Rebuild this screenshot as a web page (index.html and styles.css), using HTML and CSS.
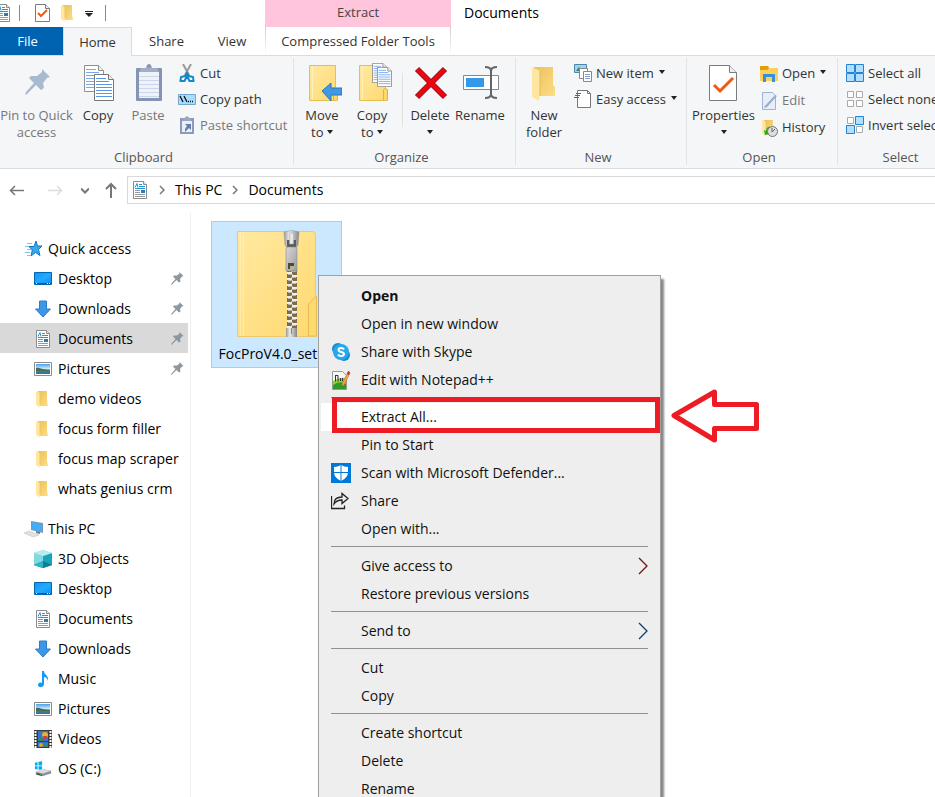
FILE: index.html
```html
<!DOCTYPE html>
<html lang="en">
<head>
<meta charset="utf-8">
<title>Documents</title>
<link rel="stylesheet" href="styles.css">
</head>
<body>
<svg class="sprite" aria-hidden="true">
  <defs>
    <linearGradient id="gold" x1="0" y1="0" x2="1" y2="1"><stop offset="0" stop-color="#ffe9a2"/><stop offset="1" stop-color="#ffd96f"/></linearGradient>
    <linearGradient id="goldDark" x1="0" y1="0" x2="1" y2="1"><stop offset="0" stop-color="#e9c15c"/><stop offset="1" stop-color="#ffdd84"/></linearGradient>
    <linearGradient id="metal" x1="0" y1="0" x2="1" y2="0"><stop offset="0" stop-color="#999"/><stop offset=".35" stop-color="#ececec"/><stop offset="1" stop-color="#858585"/></linearGradient>
    <linearGradient id="plate" x1="0" y1="0" x2="1" y2="1"><stop offset="0" stop-color="#d8d8d8"/><stop offset="1" stop-color="#9c9c9c"/></linearGradient>
    <linearGradient id="sky" x1="0" y1="0" x2="0" y2="1"><stop offset="0" stop-color="#4aa0ec"/><stop offset=".5" stop-color="#d8effa"/><stop offset=".6" stop-color="#587e82"/><stop offset="1" stop-color="#1c79a3"/></linearGradient>
    <linearGradient id="screen" x1="0" y1="0" x2="1" y2="1"><stop offset="0" stop-color="#0d93f6"/><stop offset=".5" stop-color="#26aaff"/><stop offset="1" stop-color="#0a8eef"/></linearGradient>
    <pattern id="teeth" x="50" width="10" height="6" patternUnits="userSpaceOnUse"><path fill="#7d6c45" d="M0 0h10v6H0z"/><path fill="#f0eee9" d="M0 0h5v2H0zM5 3h5v2H5z"/><path fill="#bdb8ac" d="M1 2h5v1H1zM4 5h5v1H4z"/></pattern>
  </defs>
  <symbol id="doc" viewBox="0 0 18 18"><path d="M2.500.5h10l3 3v14h-13z" fill="#fff" stroke="#8b8b8b"/><path d="M12.500.5v3h3" fill="#eee" stroke="#8b8b8b"/><path d="M4 6.500l2-4 1 4M8 3.500h3M8 5.500h6M4 7.500h10" stroke="#2196dc" fill="none"/><path d="M4 9.500h5M4 11.500h5M4 13.500h10M4 15.500h10" stroke="#999"/><path d="M10 9h4v3h-4z" fill="#2f79b5"/></symbol>
  <symbol id="folder" viewBox="0 0 18 18"><path d="M4 1h9v10l1 5H4z" fill="url(#goldDark)"/><path d="M2 1l4 2v11l-.5 3.500L2 15z" fill="#ffe7a0"/><path d="M6 3v11" stroke="#edc868"/></symbol>
  <symbol id="desktop" viewBox="0 0 18 18"><path d="M.5 2.500h17v12H.5z" fill="url(#screen)" stroke="#0067b3"/><path d="M1 13.500h16" stroke="#075b9a"/><path d="M2 13.500h1M13 13.500h1M15 13.500h1" stroke="#fff"/></symbol>
  <symbol id="down" viewBox="0 0 18 18"><path d="M5.500 1h7v8h4L9 17 1.500 9h4z" fill="#3e97e6" stroke="#2b7dc9"/></symbol>
  <symbol id="pic" viewBox="0 0 18 18"><path d="M.5 2.500h17v13H.5z" fill="#fff" stroke="#8c8c8c"/><path d="M2 4h14v10H2z" fill="url(#sky)"/><path d="M2 8c3-1 6 2 14 2v1H2z" fill="#456d55"/></symbol>
  <symbol id="star" viewBox="0 0 20 20"><path d="M12 2l1.500 5H18l-3.500 3.500 1.500 6-4.500-3L7 17l1.300-6L5 7.500h5z" fill="#35a8f0" stroke="#1577bd"/><path d="M3 4.500h5M1 7.500h4M3 10.500h4M1 13.500h5M3 16.500h3" stroke="#7cc4f0"/></symbol>
  <symbol id="pc" viewBox="0 0 20 18"><path d="M7 1l12 2v10L7 10z" fill="#8395a3"/><path d="M8 2l10 2v8L8 9z" fill="#40aef9"/><path d="M12 11l4 1v2l-4-1z" fill="#667d8c"/><path d="M0 13l5-2 10 4-6 2z" fill="#dfe2e5" stroke="#bbb" stroke-width=".5"/></symbol>
  <symbol id="cube" viewBox="0 0 18 18"><path d="M0 3l9-3 9 3v12l-9 3-9-3z" fill="#63cbd5"/><path d="M0 3l9 3v12l-9-3z" fill="#7edbe2"/><path d="M9 6l9-3v12l-9 3z" fill="#1aa3bb"/><path d="M0 3l9-3 9 3-9 3z" fill="#b7edf0"/><path d="M0 15l9-4 9 4-9 3z" fill="#0b7f98"/><path d="M0 15l9-4v7z" fill="#2fb4c6"/></symbol>
  <symbol id="music" viewBox="0 0 18 18"><path d="M8 1h2c0 4 5 4 4 10-1-3-2-4-4-4v7c0 4-6 4-6 1 0-2 2-3 4-2z" fill="#129bf1"/></symbol>
  <symbol id="video" viewBox="0 0 18 18"><path d="M0 0h18v18H0z" fill="#3a3a3a"/><path d="M4 1h10v10H4zM4 12h10v5H4z" fill="#3672cf"/><path d="M1.500 1v17M16.500 1v17" stroke="#fff" stroke-width="2" stroke-dasharray="2 1"/><circle cx="11" cy="5" r="3" fill="#e6b32f"/><path d="M9 6h4l-1 3h-2z" fill="#d13a2f"/><path d="M4 9l3-1 3 3H4zM10 15l4-1v3h-4z" fill="#398b4a"/><circle cx="7" cy="15" r="2" fill="#e6a12f"/></symbol>
  <symbol id="drive" viewBox="0 0 20 18"><path d="M1 2l3-.5V5H1zM5 1l4-.5V5H5zM1 6h3v3.500L1 9zM5 6h4v4l-4-.5z" fill="#00adef"/><path d="M2 12l7-3 10 2v3l-10 3-7-2z" fill="#8e9296"/><path d="M2 12l7-3 10 2-9 3z" fill="#d9dcdf"/><path d="M3 13.500l6 1.500v1.500L3 15z" fill="#444"/><path d="M7 15h1.500" stroke="#39d353"/></symbol>
  <symbol id="pin" viewBox="0 0 26 26"><path d="M17 0l8 8-3 1-4 5 1 5-3 2-5-5-9 9-2 1 1-3 8-9-5-5 2-2 6 0 5-4z"/></symbol>
  <symbol id="page" viewBox="0 0 28 36"><path d="M.5.5h20l7 7v28H.5z" fill="#fff" stroke="#7c7c7c"/><path d="M20.500.5v7h7" fill="#eee" stroke="#7c7c7c"/></symbol>
  <symbol id="check" viewBox="0 0 28 36"><use href="#page"/><path d="M5 20l6 6 13-13" fill="none" stroke="#f0590f" stroke-width="3"/></symbol>
  <symbol id="textpage" viewBox="0 0 20 27"><path d="M.5.5h14l5 5v21H.5z" fill="#fff" stroke="#777"/><path d="M14.500.5v5h5" fill="#eee" stroke="#777"/><path d="M2 4.500h10M2 7.500h13M2 10.500h16M2 13.500h16M2 16.500h16M2 19.500h16M2 22.500h16" stroke="#5b95e8"/></symbol>
  <symbol id="bigfolder" viewBox="0 0 30 36"><path d="M.5.500h26v24h2v11H.5z" fill="url(#gold)" stroke="#e6c04e"/><path d="M3.500 1v34" stroke="#fff0b8"/><path d="M24.500 35V25l2-2 2 2v10" fill="#ffd869" stroke="#e0b33d"/></symbol>
  <symbol id="more" viewBox="0 0 6 12"><path d="M1 2l4 4-4 4" fill="none" stroke="#777" stroke-width="1.500"/></symbol>
  <symbol id="sub" viewBox="0 0 10 18"><path d="M1 1l8 8-8 8" fill="none" stroke="currentColor" stroke-width="1.300"/></symbol>
</svg>

<div class="window">
  <header class="titlebar">
    <div class="quick">
      <svg class="i18 cut-left"><use href="#doc"/></svg>
      <i class="bar"></i>
      <svg class="qcheck" viewBox="0 0 15 18"><path d="M.5.500h10l4 4v13H.5z" fill="#fff" stroke="#7c7c7c"/><path d="M10.500.5v4h4" fill="#eee" stroke="#7c7c7c"/><path d="M3 9l3 3 6-6" fill="none" stroke="#f0590f" stroke-width="2"/></svg>
      <svg class="i18"><use href="#folder"/></svg>
      <svg class="customize" viewBox="0 0 8 6"><path d="M0 .5h8" stroke="#222"/><path d="M0 2h8L4 6z" fill="#222"/></svg>
      <i class="bar"></i>
    </div>
    <div class="context-title">Extract</div>
    <h1>Documents</h1>
  </header>

  <nav class="tabs" aria-label="Ribbon tabs">
    <button class="tab file">File</button>
    <button class="tab home">Home</button>
    <button class="tab share">Share</button>
    <button class="tab view">View</button>
    <button class="tab tools">Compressed Folder Tools</button>
  </nav>

  <section class="ribbon" aria-label="Ribbon">
    <div class="group clipboard">
      <div class="tools-row">
        <button class="big wide off"><svg class="art" viewBox="0 0 40 42"><use href="#pin" x="8" y="9" width="26" height="26" fill="#a9b9d0"/></svg><span>Pin to Quick<br>access</span></button>
        <button class="big"><svg class="art" viewBox="0 0 40 42"><use href="#textpage" x="6" y="5" width="20" height="27" opacity=".8"/><use href="#textpage" x="16" y="14" width="20" height="27"/></svg><span>Copy</span></button>
        <button class="big off"><svg class="art" viewBox="0 0 40 42"><rect x="8" y="8" width="26" height="33" rx="1" fill="#8594b4"/><path d="M11 12h20v26H11z" fill="#eef2f9"/><path d="M11 16.500h20M11 20.500h20M11 24.500h20M11 28.500h20M11 32.500h20M11 36.500h20" stroke="#cbd6e8"/><path d="M13 8h5a3 3 0 016 0h5l2 4H11z" fill="#a1aec6"/><circle cx="21" cy="6" r="2" fill="#8594b4"/></svg><span>Paste</span></button>
        <div class="stack">
          <button class="small"><svg class="i18" viewBox="0 0 18 18"><path d="M5 0l6 11M13 0L7 11" stroke="#999" stroke-width="2"/><path d="M9 9l-2 3-4 1-.5 4h4l2-4 .5-2 .5 2 2 4h4l-.5-4-4-1z" fill="none" stroke="#1687c8" stroke-width="2"/></svg>Cut</button>
          <button class="small"><svg class="i18" viewBox="0 0 18 18"><path d="M.5 4.500h17v10H.5z" fill="#a5dcff" stroke="#73a8ca"/><path d="M2 6l3 6M6 6l3 6M10 11.500h1M12 11.500h1M14 11.500h1" stroke="#111" stroke-width="1.300"/></svg>Copy path</button>
          <button class="small off"><svg class="i18" viewBox="0 0 18 18"><path d="M2 2h14v16H2z" fill="#8b9bb9"/><path d="M4 5h10v11H4z" fill="#e9eff7"/><path d="M5 3l4-3 4 3v2H5z" fill="#9aa8c0"/><path d="M7 8h6v6l-2-2-4 4 0-3 2-3z" fill="#647faa"/></svg>Paste shortcut</button>
        </div>
      </div>
      <div class="label">Clipboard</div>
    </div>

    <div class="group organize">
      <div class="tools-row">
        <button class="big"><svg class="art" viewBox="0 0 40 42"><use href="#bigfolder" x="7" y="5" width="30" height="36"/><path d="M20 31l9-8v5h11v7H29v6z" fill="#3f99e5" stroke="#2877bb"/></svg><span>Move<br>to <i class="caret"></i></span></button>
        <button class="big"><svg class="art" viewBox="0 0 40 42"><use href="#bigfolder" x="7" y="5" width="30" height="36"/><use href="#textpage" x="20" y="3" width="15" height="20"/><use href="#textpage" x="25" y="7" width="15" height="20"/></svg><span>Copy<br>to <i class="caret"></i></span></button>
        <i class="divider"></i>
        <button class="big"><svg class="art" viewBox="0 0 40 42"><path d="M7 9l28 28M35 9L7 37" stroke="#9d1118" stroke-width="6"/><path d="M7.500 9.500l27 27M34.500 9.500l-27 27" stroke="#ea0712" stroke-width="4"/></svg><span>Delete<br><i class="caret"></i></span></button>
        <button class="big"><svg class="art" viewBox="0 0 40 42"><path d="M3.500 15.500h35v14h-35z" fill="#fff" stroke="#888"/><path d="M6 18h18v9H6z" fill="#3599e9"/><path d="M31 9v28M25 7c4 0 6 1 6 4 0-3 2-4 6-4M25 38c4 0 6-1 6-4 0 3 2 4 6 4" fill="none" stroke="#666" stroke-width="2"/></svg><span>Rename</span></button>
      </div>
      <div class="label">Organize</div>
    </div>

    <div class="group new">
      <div class="tools-row">
        <button class="big"><svg class="art" viewBox="0 0 40 42"><path d="M10 7h19v18l2 2v9H10z" fill="url(#goldDark)"/><path d="M8 7l8 4v20l-1 10-7-4z" fill="#ffe6a0"/><path d="M16 11v25" stroke="#e1bc5c"/></svg><span>New<br>folder</span></button>
        <div class="stack">
          <button class="small"><svg class="i18" viewBox="0 0 18 18"><path d="M.5.5h12v8H.5z" fill="#9ed3f3" stroke="#4c86a9"/><path d="M2 7l3-4 3 4z" fill="#477b68"/><path d="M5.500 4.500h8v10h-8z" fill="#fff" stroke="#888"/><path d="M9.500 7.500h8v10h-8z" fill="#fff" stroke="#888"/><path d="M11 10.500h5M11 12.500h5M11 14.500h5" stroke="#8a9ed0"/></svg>New item <i class="caret"></i></button>
          <button class="small"><svg class="i18" viewBox="0 0 18 18"><path d="M3.500.5h10l3 3v14h-13z" fill="#fff" stroke="#777"/><path d="M13.500.5v3h3" fill="none" stroke="#777"/><path d="M2 3.500h5M1 5.500h5M0 7.500h5" stroke="#1877ae"/></svg>Easy access <i class="caret"></i></button>
        </div>
      </div>
      <div class="label">New</div>
    </div>

    <div class="group open">
      <div class="tools-row">
        <button class="big wide"><svg class="art" viewBox="0 0 40 42"><use href="#check" x="5" y="5" width="28" height="36"/></svg><span>Properties<br><i class="caret"></i></span></button>
        <div class="stack loose">
          <button class="small"><svg class="i18" viewBox="0 0 18 18"><path d="M0 1h8l1 2h9v13H0z" fill="#ffd05b"/><path d="M0 1h8l1 2-2 2H0z" fill="#dda00b"/><path d="M3 9h12v8h-3v-5H6v5H3z" fill="#348fdc"/></svg>Open <i class="caret"></i></button>
          <button class="small off"><svg class="i18" viewBox="0 0 18 18"><path d="M2.500.5h10l3 3v14h-13z" fill="#e7eef8" stroke="#a2b3cf"/><path d="M4 15L15 3l2 1L7 15l-3 1z" fill="#9aadcc"/></svg>Edit</button>
          <button class="small"><svg class="i18" viewBox="0 0 18 18"><use href="#folder" width="18" height="18"/><circle cx="12.500" cy="12.500" r="5" fill="#ddd" stroke="#777"/><path d="M12 13l3-3M12 9v4" stroke="#666"/><path d="M11 8c-5 1-4 5-2 7l-4 1-1-5 2 1c0-4 3-5 5-4z" fill="#21ab32"/></svg>History</button>
        </div>
      </div>
      <div class="label">Open</div>
    </div>

    <div class="group select">
      <div class="tools-row">
        <div class="stack">
          <button class="small"><svg class="i18" viewBox="0 0 18 18"><path d="M.5.5h8v8h-8zM9.500.5h8v8h-8zM.5 9.500h8v8h-8zM9.500 9.500h8v8h-8z" fill="#b1dfff" stroke="#2583d3"/></svg>Select all</button>
          <button class="small"><svg class="i18" viewBox="0 0 18 18"><path d="M1.500 1.500h6v6h-6zM10.500 1.500h6v6h-6zM1.500 10.500h6v6h-6zM10.500 10.500h6v6h-6z" fill="#fff" stroke="#aaa"/></svg>Select none</button>
          <button class="small"><svg class="i18" viewBox="0 0 18 18"><path d="M1.500 1.500h6v6h-6zM10.500 10.500h6v6h-6z" fill="#fff" stroke="#aaa"/><path d="M9.500.5h8v8h-8zM.5 9.500h8v8h-8z" fill="#b1dfff" stroke="#2583d3"/></svg>Invert selection</button>
        </div>
      </div>
      <div class="label">Select</div>
    </div>
  </section>

  <div class="address">
    <div class="arrows">
      <button aria-label="Back"><svg class="nav" viewBox="0 0 16 16"><path d="M15 8.500H2M6 4L1.500 8.500 6 13" fill="none" stroke="#777" stroke-width="1.500"/></svg></button>
      <button aria-label="Forward"><svg class="nav" viewBox="0 0 16 16"><path d="M1 8.500h13M10 4l4.500 4.500L10 13" fill="none" stroke="#ddd" stroke-width="1.500"/></svg></button>
      <button aria-label="Recent"><svg class="recent" viewBox="0 0 8 8"><path d="M0 2.500l4 4 4-4" fill="none" stroke="#777" stroke-width="2"/></svg></button>
      <button aria-label="Up"><svg class="nav" viewBox="0 0 16 16"><path d="M8 16V2M3 7l5-5 5 5" fill="none" stroke="#777" stroke-width="2"/></svg></button>
    </div>
    <div class="crumbs">
      <svg class="i18"><use href="#doc"/></svg>
      <svg class="more"><use href="#more"/></svg>
      <a href="#pc-root">This PC</a>
      <svg class="more"><use href="#more"/></svg>
      <a href="#documents">Documents</a>
    </div>
  </div>

  <div class="body">
    <nav class="sidebar" aria-label="Folders">
      <a class="root" href="#quick"><svg class="i20"><use href="#star"/></svg>Quick access</a>
      <a href="#desktop1"><svg class="i18"><use href="#desktop"/></svg>Desktop<svg class="pinned"><use href="#pin"/></svg></a>
      <a href="#downloads1"><svg class="i18"><use href="#down"/></svg>Downloads<svg class="pinned"><use href="#pin"/></svg></a>
      <a class="current" href="#documents"><svg class="i18"><use href="#doc"/></svg>Documents<svg class="pinned"><use href="#pin"/></svg></a>
      <a href="#pictures1"><svg class="i18"><use href="#pic"/></svg>Pictures<svg class="pinned"><use href="#pin"/></svg></a>
      <a href="#demo"><svg class="i18"><use href="#folder"/></svg>demo videos</a>
      <a href="#filler"><svg class="i18"><use href="#folder"/></svg>focus form filler</a>
      <a href="#scraper"><svg class="i18"><use href="#folder"/></svg>focus map scraper</a>
      <a href="#crm"><svg class="i18"><use href="#folder"/></svg>whats genius crm</a>
      <a class="root second" href="#pc-root"><svg class="i20"><use href="#pc"/></svg>This PC</a>
      <a href="#objects"><svg class="i18"><use href="#cube"/></svg>3D Objects</a>
      <a href="#desktop2"><svg class="i18"><use href="#desktop"/></svg>Desktop</a>
      <a href="#documents2"><svg class="i18"><use href="#doc"/></svg>Documents</a>
      <a href="#downloads2"><svg class="i18"><use href="#down"/></svg>Downloads</a>
      <a href="#music"><svg class="i18"><use href="#music"/></svg>Music</a>
      <a href="#pictures2"><svg class="i18"><use href="#pic"/></svg>Pictures</a>
      <a href="#videos"><svg class="i18"><use href="#video"/></svg>Videos</a>
      <a href="#os"><svg class="i18"><use href="#drive"/></svg>OS (C:)</a>
    </nav>

    <main class="files">
      <button class="tile">
        <svg class="zip" viewBox="0 0 80 108">
          <path d="M.5 1.500h75q3 0 3 3V66l1 1v39.500H.5z" fill="url(#gold)" stroke="#eccb67"/>
          <path d="M3.500 2v104M6.500 2v104" stroke="#fff0ba" stroke-width=".7"/>
          <path d="M71.500 106V74l8-8v40z" fill="#ffd86f" stroke="#e5bd55"/>
          <path d="M50 40h10v58H50z" fill="url(#teeth)"/>
          <path d="M47 2q8-3 15 0l-1 13q-1 3-3 3h-7q-2 0-3-3z" fill="url(#metal)" stroke="#999" stroke-width=".6"/>
          <path d="M50 10h9v7h-9z" fill="#5b5b5b"/>
          <path d="M50 17h9l1 2v22H49V19z" fill="url(#plate)" stroke="#8c8c8c" stroke-width=".6"/>
          <path d="M52.500 3h4v11h-4z" fill="#e6e6e6" stroke="#aaa" stroke-width=".5"/>
          <path d="M51 33h6v6h-6z" fill="#4c4a3c"/><path d="M53 36h4v3h-4z" fill="#bbb78d"/>
          <path d="M49 98h11v9H49z" fill="url(#metal)"/><path d="M54.500 98v6" stroke="#888"/>
        </svg>
        <span>FocProV4.0_setup</span>
      </button>

      <div class="menu" role="menu">
        <button role="menuitem" class="default"><span class="ico"></span>Open</button>
        <button role="menuitem"><span class="ico"></span>Open in new window</button>
        <button role="menuitem"><span class="ico"><svg class="i20" viewBox="0 0 20 20"><circle cx="7" cy="7" r="6" fill="#1688cf"/><circle cx="13" cy="13" r="6" fill="#1688cf"/><circle cx="10" cy="10" r="8" fill="#26a8ee"/><path d="M13 7.500C12 5.500 7.500 5.500 7.500 8s5.500 1.500 5.500 4-5 2.500-6 .5" fill="none" stroke="#fff" stroke-width="2"/></svg></span>Share with Skype</button>
        <button role="menuitem"><span class="ico"><svg class="i20" viewBox="0 0 20 20"><path d="M1.500 1.500h10l4 4v14h-14z" fill="#f7f7f7" stroke="#999"/><path d="M2 11q7-4 13-3v11H2z" fill="#8fd435"/><path d="M2 15q7-5 13-1v5H2z" fill="#2f9a25"/><path d="M4.500 5.500v6M4 5.500h3v6M9.500 8v3M11.500 8v3" fill="none" stroke="#333"/><path d="M17 2l2 1-6 12-2 1v-2z" fill="#f4ac35" stroke="#a75d28" stroke-width=".5"/><path d="M17 1l2 1-1 3-2-1z" fill="#b03b2b"/></svg></span>Edit with Notepad++</button>
        <hr>
        <button role="menuitem" class="hover"><span class="ico"></span>Extract All...</button>
        <button role="menuitem"><span class="ico"></span>Pin to Start</button>
        <button role="menuitem"><span class="ico"><svg class="i20" viewBox="0 0 20 20"><path d="M0 0h20v20H0z" fill="#0078d7"/><path d="M10 2q3 2 7 2v5q0 6-7 9-7-3-7-9V4q4 0 7-2z" fill="#fff"/><path d="M10 2v16M2 9.500h16" stroke="#0078d7"/></svg></span>Scan with Microsoft Defender...</button>
        <button role="menuitem"><span class="ico"><svg class="i18" viewBox="0 0 18 18"><path d="M.500 4v12.500h13v-3M3 12c0-5 3-7 8-7V1.500l6 5-6 5V8c-4 0-6 1-8 4z" fill="none" stroke="#222" stroke-width="1.300"/></svg></span>Share</button>
        <button role="menuitem"><span class="ico"></span>Open with...</button>
        <hr>
        <button role="menuitem"><span class="ico"></span>Give access to<svg class="sub warm"><use href="#sub"/></svg></button>
        <button role="menuitem"><span class="ico"></span>Restore previous versions</button>
        <hr>
        <button role="menuitem"><span class="ico"></span>Send to<svg class="sub cool"><use href="#sub"/></svg></button>
        <hr>
        <button role="menuitem"><span class="ico"></span>Cut</button>
        <button role="menuitem"><span class="ico"></span>Copy</button>
        <hr>
        <button role="menuitem"><span class="ico"></span>Create shortcut</button>
        <button role="menuitem"><span class="ico"></span>Delete</button>
        <button role="menuitem"><span class="ico"></span>Rename</button>
        <div class="marker"></div>
        <svg class="pointer" viewBox="0 0 90 54"><path d="M4 26.500L44.500 3v12.500H86.500v24H44.500V51z" fill="#fff" stroke="#ed1c24" stroke-width="5" stroke-linejoin="round"/></svg>
      </div>
    </main>
  </div>
</div>
</body>
</html>
```
FILE: styles.css
```css
* { box-sizing: border-box; }
body {
  margin: 0;
  font: 14px/20px "Open Sans", "Noto Sans", sans-serif;
  color: #000;
  background: #fff;
}
button {
  font: inherit;
  color: inherit;
  background: none;
  border: 0;
  padding: 0;
  margin: 0;
}
a { color: inherit; text-decoration: none; }
svg { display: block; flex: none; }
.sprite { position: absolute; width: 0; height: 0; }
.i18 { width: 18px; height: 18px; }
.i20 { width: 20px; height: 20px; }

.window {
  display: flex;
  flex-direction: column;
  height: 100vh;
  overflow: hidden;
}

/* Title bar */
.titlebar { display: flex; height: 27px; flex: none; }
.quick {
  display: flex;
  align-items: center;
  width: 265px;
  padding-bottom: 1px;
}
.cut-left { margin-left: -6px; }
.bar { width: 1px; height: 16px; background: #888; }
.quick .bar { margin-left: 7px; }
.qcheck { width: 15px; height: 18px; margin: 0 9px 0 15px; }
.customize { width: 8px; height: 6px; margin: 2px 5px 0 8px; }
.context-title {
  width: 186px;
  background: #ffc5dd;
  color: #444;
  text-align: center;
  font-size: 13px;
  line-height: 24px;
}
h1 { margin: 0 0 0 13px; font-size: 14px; font-weight: 400; line-height: 26px; }

/* Tabs */
.tabs {
  display: flex;
  height: 29px;
  flex: none;
  border-bottom: 1px solid #d9dbdd;
  font-size: 13px;
  line-height: 28px;
  color: #333;
}
.file { width: 63px; padding-right: 8px; background: #0063b1; color: #fff; }
.home {
  width: 69px;
  margin-bottom: -1px;
  background: #f5f6f7;
  border: 1px solid #d9dbdd;
  border-bottom: 0;
}
.share { width: 69px; }
.view { width: 64px; padding-right: 2px; }
.tools {
  width: 186px;
  border: 1px solid;
  border-width: 0 1px;
  border-image: linear-gradient(#ccc, #fff) 1;
}

/* Ribbon */
.ribbon {
  display: flex;
  height: 113px;
  flex: none;
  background: #f5f6f7;
  border-bottom: 1px solid #d9dbdd;
  font-size: 13px;
  line-height: 17px;
  color: #333;
}
.group {
  display: flex;
  flex-direction: column;
  flex: none;
  margin: 2px 0 3px;
  border-right: 1px solid #e2e3e4;
}
.clipboard { width: 294px; }
.organize { width: 222px; }
.new { width: 171px; }
.open { width: 151px; }
.select { width: 125px; border: 0; }
.tools-row { display: flex; flex: 1; }
.label { text-align: center; line-height: 16px; color: #555; padding-right: 6px; }
.select .label { padding-right: 0; }
.big {
  display: flex;
  flex-direction: column;
  align-items: center;
  justify-content: flex-start;
  gap: 5px;
  width: 50px;
  padding-top: 2px;
  white-space: nowrap;
  flex: none;
}
.art { width: 40px; height: 42px; }
.wide { width: 73px; }
.off { color: #777; }
.organize .tools-row { padding-left: 3px; }
.organize .divider { width: 1px; height: 54px; margin: 15px 2px 0 5px; background: #e0e1e3; }
.new .tools-row { padding-left: 3px; }
.caret {
  display: inline-block;
  margin: 0 0 3px 3px;
  border: 3px solid transparent;
  border-top: 4px solid #222;
  border-bottom: 0;
}
.big br + .caret { margin-left: 0; }
.small .caret { margin-left: 1px; }
.stack { display: flex; flex-direction: column; padding: 2px 0 0 5px; }
.small {
  display: flex;
  align-items: center;
  gap: 4px;
  height: 26px;
  white-space: nowrap;
}
.loose { padding-left: 0; }
.loose .small { height: 27px; }
.select .stack { padding-left: 8px; }

/* Address bar */
.address { display: flex; flex: none; padding: 7px 0; }
.arrows { display: flex; align-items: center; width: 127px; padding-left: 9px; }
.arrows button + button { margin-left: 22px; }
.arrows button:nth-child(3) { margin-left: 18px; }
.arrows button:nth-child(4) { margin-left: 14px; }
.nav { width: 16px; height: 16px; }
.recent { width: 8px; height: 8px; }
.crumbs {
  display: flex;
  align-items: center;
  flex: 1;
  height: 28px;
  padding-left: 3px;
  border: 1px solid #d9d9d9;
  border-right: 0;
}
.more { width: 6px; height: 12px; margin: 0 10px; }

/* Content */
.body { display: flex; flex: 1; min-height: 0; }
.sidebar {
  display: flex;
  flex-direction: column;
  width: 191px;
  flex: none;
  margin-top: 2px;
  padding: 20px 2px 0 0;
  border-right: 1px solid #eee;
}
.sidebar a {
  display: flex;
  align-items: center;
  gap: 6px;
  height: 30px;
  flex: none;
  padding: 1px 4px 0 34px;
  white-space: nowrap;
}
.sidebar .root { padding-left: 24px; gap: 4px; }
.sidebar .second { margin-top: 10px; }
.sidebar .current { background: #d9d9d9; }
.pinned { width: 13px; height: 13px; margin-left: auto; fill: #8d979f; }
.files { position: relative; flex: 1; padding: 10px 20px; }
.tile {
  display: flex;
  flex-direction: column;
  align-items: center;
  width: 131px;
  height: 147px;
  padding-top: 8px;
  border: 1px solid #99d1ff;
  background: #cce8ff;
}
.zip { width: 80px; height: 108px; margin-bottom: 6px; }

/* Context menu, opened over the selected file */
.menu {
  position: absolute;
  left: 127px;
  top: 64px;
  width: 343px;
  padding: 6px 2px;
  background: #eee;
  border: 1px solid #a0a0a0;
  box-shadow: 3px 4px 2px #888;
  color: #111;
}
.menu button {
  display: flex;
  align-items: center;
  width: 100%;
  height: 28px;
  padding: 0 10px;
  text-align: left;
}
.menu .default { font-weight: 700; }
.menu .hover { background: #fff; }
.ico { width: 30px; }
.menu hr { height: 1px; margin: 3px 10px 5px; border: 0; background: #919191; }
.sub { width: 10px; height: 18px; margin-left: auto; }
.warm { color: #6b1410; }
.cool { color: #123f68; }

/* Callout over the highlighted command */
.marker {
  position: absolute;
  left: 13px;
  right: 0;
  top: 121px;
  height: 36px;
  border: 5px solid #ed1c24;
}
.pointer { position: absolute; left: 351px; top: 113px; width: 90px; height: 54px; }
```
